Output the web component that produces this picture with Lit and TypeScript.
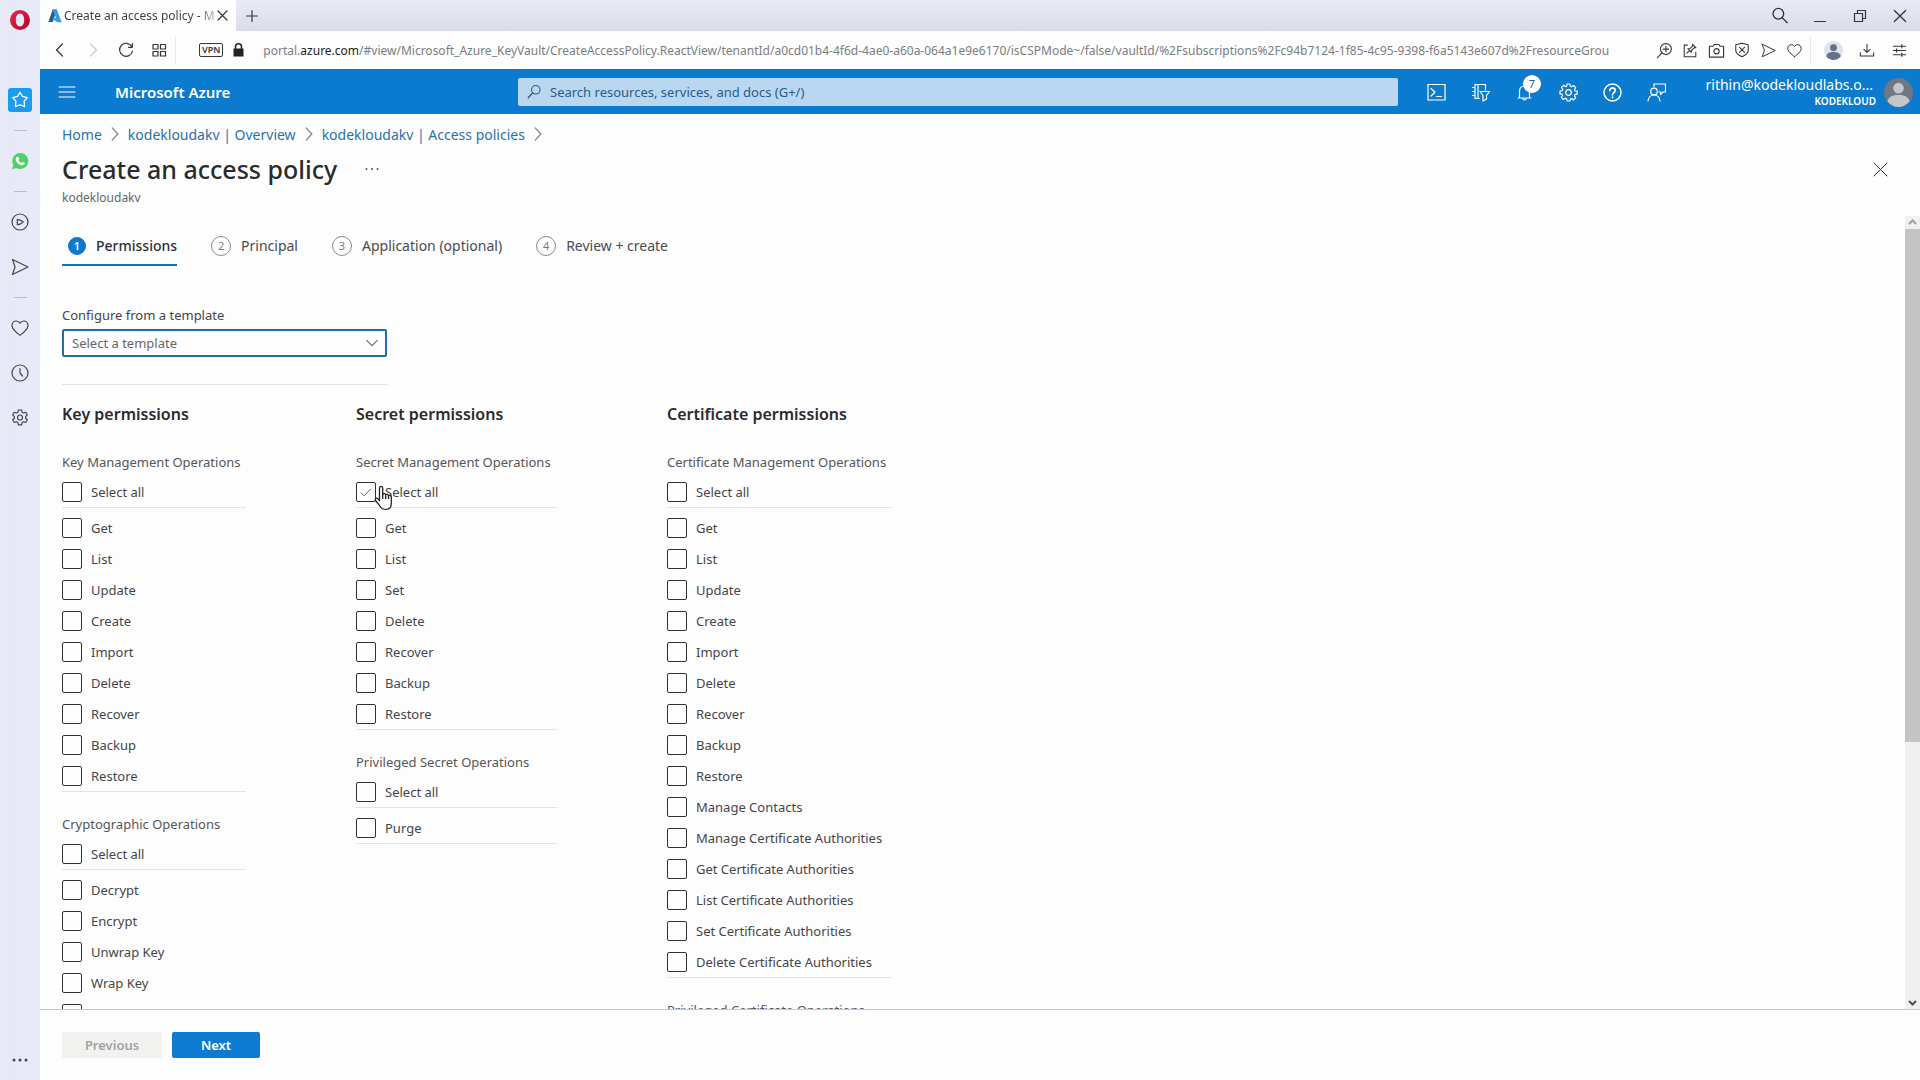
import { LitElement, html, svg, css, nothing } from "lit";
import type { TemplateResult } from "lit";
import { customElement, property } from "lit/decorators.js";
import { classMap } from "lit/directives/class-map.js";

const icon = (body: TemplateResult, size = 18, box = 18) => html`
  <svg width=${size} height=${size} viewBox="0 0 ${box} ${box}" fill="none" stroke="currentColor"
    stroke-width="1.2" stroke-linecap="round" stroke-linejoin="round" aria-hidden="true">${body}</svg>`;

const icons = {
  star: svg`<path d="M9 1.300l2.400 4.100 4.900 1.200-3.200 3.700.5 5.200L9 13.800l-4.600 1.700.5-5.200L1.700 6.600l4.900-1.200z" stroke-width="1.300"/>`,
  play: svg`<circle cx="9" cy="9" r="8"/><path d="M6.300 6.300v5.400c2 0 3.900-.9 6-2.700-2.100-1.800-4-2.700-6-2.700z"/>`,
  send: svg`<path d="M1.500 1.500L17 9 1.500 16.500 4 9z"/>`,
  heart: svg`<path d="M9 16.300C5 13.300 1 10.500 1 6.500 1 3.800 3 2 5.200 2 6.800 2 8.300 2.900 9 4.300 9.700 2.900 11.200 2 12.800 2 15 2 17 3.800 17 6.500c0 4-4 6.800-8 9.800z"/>`,
  clock: svg`<circle cx="9" cy="9" r="8"/><path d="M9 4.500V9l2.500 3"/>`,
  sideGear: svg`<path d="M7.400 1h3.200l.5 2.200 1.400.8 2.200-.8 1.600 2.700-1.700 1.600v1.800l1.700 1.500-1.600 2.700-2.200-.7-1.400.8-.5 2.300H7.400l-.5-2.300-1.400-.8-2.200.7-1.600-2.700 1.700-1.500V7.500L1.700 5.900l1.600-2.700 2.200.8 1.400-.8z"/><circle cx="9" cy="8.500" r="2.500"/>`,
  close: svg`<path d="M4 4l10 10M14 4L4 14"/>`,
  closeThin: svg`<path d="M3 3l13 13M16 3L3 16" stroke-width="1"/>`,
  closeTab: svg`<path d="M1 1l9 9M10 1L1 10"/>`,
  plus: svg`<path d="M9 3.500v11M3.500 9h11"/>`,
  back: svg`<path d="M11.500 3L5.500 9l6 6"/>`,
  forward: svg`<path d="M6.500 3l6 6-6 6"/>`,
  reload: svg`<path d="M14.800 5.600A6.500 6.500 0 1 0 15.500 10M15.300 2.500v3.800h-3.800"/>`,
  tiles: svg`<rect x="3" y="3.500" width="5" height="4.500"/><rect x="10.500" y="3.500" width="5" height="4.500"/><rect x="3" y="10.500" width="5" height="4.500"/><rect x="10.500" y="10.500" width="5" height="4.500"/>`,
  find: svg`<circle cx="7.500" cy="7" r="4.800"/><path d="M11 10.600L15.500 15"/>`,
  minimise: svg`<path d="M3.500 14.500h11"/>`,
  restore: svg`<path d="M3.500 6.500h8v8h-8zM6.500 6.500v-3h8v8h-3" stroke-linejoin="miter"/>`,
  zoomIn: svg`<circle cx="10.500" cy="7.500" r="5.800"/><path d="M6.400 11.600L1.500 16.500M7.700 7.500h5.600M10.500 4.700v5.600"/>`,
  pinEdit: svg`<path d="M6 3.500H2.500v13h13V11.500M5.500 12.500l3.200-3.200M6.500 7.500l4 4 .5-2.300 3-3 1.800.300-4-4 .3 1.800-3 3z"/>`,
  camera: svg`<path d="M1.500 4.500h3.800L6.500 2.700h5l1.200 1.800h3.800v11.500h-15z"/><circle cx="9" cy="9.800" r="2.800"/>`,
  shield: svg`<path d="M9 1.500l7 1.700v6.500c0 3-3 5.200-7 6.800-4-1.600-7-3.800-7-6.800V3.200z"/><path d="M6.200 6l5.600 5.600M11.800 6l-5.600 5.600"/>`,
  download: svg`<path d="M9 2.500v9M5.500 8.200L9 11.700l3.500-3.500M1.500 12v3.700h15V12"/>`,
  sliders: svg`<path d="M2.500 4.500h13M2.500 9h13M2.500 13.500h13M11.500 2.800v3.400M6 7.300v3.400M11.500 11.800v3.400"/>`,
  menu: svg`<path d="M1 4h16M1 9h16M1 14h16"/>`,
  azSearch: svg`<circle cx="11" cy="6.500" r="4.800"/><path d="M7.500 10L2.500 15.500" stroke-width="1.400"/>`,
  shell: svg`<path d="M1 1.500h17v15.500H1z" stroke-linejoin="miter"/><path d="M4 5.500l4 3.700L4 13M9.500 13.500h5"/>`,
  filter: svg`<path d="M8.500 15.500H4v-14h10.500v5.500M7 1.500v14M1.500 4.500H4M1.500 8.500H4M1.500 12.500H4M9 8.500h9.500L15.500 12.500v3.500l-3.500 2v-5.500z"/>`,
  bell: svg`<path d="M3 15h13M4.500 15V8.500C4.500 5 6.500 3 9.500 3s5 2 5 5.500V15M7.800 15.500c.2 2 3.200 2 3.400 0"/>`,
  gear: svg`<path d="M8 1h3l.4 2.300 1.300.5 1.900-1.300 2.100 2.100-1.300 1.900.5 1.300 2.300.4v3l-2.300.4-.5 1.300 1.300 1.900-2.100 2.100-1.900-1.300-1.300.5L11 18H8l-.4-2.300-1.300-.5-1.900 1.300-2.100-2.100 1.300-1.900-.5-1.300L1 11V8l2.300-.4.5-1.300-1.300-1.900L4.600 2.300l1.900 1.300L7.600 3.300z"/><circle cx="9.500" cy="9.500" r="2.800"/>`,
  help: svg`<circle cx="9.500" cy="9.500" r="8.500" stroke-width="1.500"/><path d="M6.800 7.500c0-3.500 5.400-3.300 5.400 0 0 2-2.700 2.100-2.700 4.300M9.500 14.200v.4" stroke-width="1.700"/>`,
  feedback: svg`<circle cx="7" cy="8.500" r="3.300"/><path d="M1 18c.5-3.800 2.700-6 6-6s5.500 2.200 6 6M7 3.500V1h11.500v8H16l-2.500 2.500V9H12"/>`,
  chevron: svg`<path d="M3 6l6 6 6-6"/>`,
  crumb: svg`<path d="M6.500 3.500L11.500 9l-5 5.500"/>`,
};

const avatar = (bg: string, fg: string, size: number) => html`
  <svg width=${size} height=${size} viewBox="0 0 30 30" aria-hidden="true">
    <circle cx="15" cy="15" r="15" fill=${bg}/>
    <circle cx="15" cy="10.500" r="5.500" fill=${fg}/>
    <path d="M3.500 24c1.500-5 5.500-6.500 11.500-6.500s10 1.500 11.500 6.500c-3 4-7 6-11.500 6s-8.500-2-11.500-6z" fill=${fg}/>
  </svg>`;

interface Group { title: string; items: string[]; hovered?: boolean }
interface Column { title: string; groups: Group[] }

const BASIC = ["Get", "List", "Update", "Create", "Import", "Delete", "Recover", "Backup", "Restore"];

const COLUMNS: Column[] = [
  {
    title: "Key permissions",
    groups: [
      { title: "Key Management Operations", items: BASIC },
      { title: "Cryptographic Operations", items: ["Decrypt", "Encrypt", "Unwrap Key", "Wrap Key", "Verify"] },
    ],
  },
  {
    title: "Secret permissions",
    groups: [
      { title: "Secret Management Operations", hovered: true, items: ["Get", "List", "Set", "Delete", "Recover", "Backup", "Restore"] },
      { title: "Privileged Secret Operations", items: ["Purge"] },
    ],
  },
  {
    title: "Certificate permissions",
    groups: [
      {
        title: "Certificate Management Operations",
        items: [...BASIC, "Manage Contacts", "Manage Certificate Authorities", "Get Certificate Authorities",
          "List Certificate Authorities", "Set Certificate Authorities", "Delete Certificate Authorities"],
      },
      { title: "Privileged Certificate Operations", items: ["Purge"] },
    ],
  },
];

const base = css`
  * { box-sizing: border-box; }
  button { font: inherit; color: inherit; background: none; border: 0; padding: 0; margin: 0; cursor: pointer; }
  svg { display: block; flex: none; }
  .icon-button { display: flex; align-items: center; justify-content: center; }
`;

@customElement("side-bar")
class SideBar extends LitElement {
  static styles = [base, css`
    :host { display: flex; flex-direction: column; align-items: center; width: 40px; padding: 9px 0 12px;
      background: linear-gradient(90deg, #e6eaf5, #e8e9f7); color: #3f4658; }
    .speed { width: 24px; height: 24px; border-radius: 3px; background: #1a9cf0; color: #fff; margin-top: 57px; }
    .rule { width: 13px; height: 1px; background: #b9bdcc; }
    .link { width: 24px; height: 24px; }
    .chat { margin: 18px 0; }
    .first { margin-top: 18px; }
    .send { margin: 21px 0 18px; }
    .heart { margin-top: 18px; }
    .later { margin-top: 21px; }
    .speed + .rule { margin-top: 18px; }
    .more { margin-top: auto; width: 24px; height: 16px; }
  `];
  render() {
    return html`
      <button class="icon-button" aria-label="Opera menu">
        <svg width="22" height="22" viewBox="0 0 22 22">
          <defs><linearGradient id="o" x1="0" x2="1" y1="0" y2="1"><stop offset="0" stop-color="#f3244a"/><stop offset="1" stop-color="#a50a2c"/></linearGradient></defs>
          <path fill="url(#o)" fill-rule="evenodd" d="M11 1a10 10 0 1 0 0 20 10 10 0 0 0 0-20zm0 3.500c2.600 0 4.200 2.900 4.200 6.500s-1.600 6.500-4.200 6.500S6.800 14.600 6.800 11 8.400 4.500 11 4.500z"/>
        </svg>
      </button>
      <button class="icon-button speed" aria-label="Speed Dial">${icon(icons.star)}</button>
      <div class="rule"></div>
      <button class="icon-button link chat" aria-label="WhatsApp">
        <svg width="18" height="18" viewBox="0 0 18 18">
          <path fill="#4fd264" d="M9.200 1a8 8 0 1 1-3.800 15L1 17.200l1.300-4.300A8 8 0 0 1 9.200 1z"/>
          <path fill="#fff" d="M6 4.800l1.300 0 1 2.300-.9 1.200c.7 1.300 1.700 2.100 3 2.700l1.100-1.200 2.200 1.200c0 1.700-1.500 2.400-2.900 2.200C7.600 12.700 5 9.900 4.700 7.400 4.600 6.300 5.200 5.300 6 4.800z"/>
        </svg>
      </button>
      <div class="rule"></div>
      <button class="icon-button link first" aria-label="Player">${icon(icons.play)}</button>
      <button class="icon-button link send" aria-label="My Flow">${icon(icons.send)}</button>
      <div class="rule"></div>
      <button class="icon-button link heart" aria-label="Bookmarks">${icon(icons.heart)}</button>
      <button class="icon-button link later" aria-label="History">${icon(icons.clock)}</button>
      <button class="icon-button link later" aria-label="Settings">${icon(icons.sideGear)}</button>
      <button class="icon-button more" aria-label="More">
        <svg width="18" height="6" viewBox="0 0 18 6" fill="currentColor"><circle cx="3" cy="3" r="1.500"/><circle cx="9" cy="3" r="1.500"/><circle cx="15" cy="3" r="1.500"/></svg>
      </button>`;
  }
}

@customElement("browser-chrome")
class BrowserChrome extends LitElement {
  static styles = [base, css`
    :host { display: block; color: #33363c; }
    .tabs { display: flex; align-items: stretch; height: 31px; background: linear-gradient(#e8ebf5, #d9dde6); }
    .tab { display: flex; align-items: center; gap: 2px; width: 196px; padding: 0 8px; background: #fdfdfd; font-size: 12px; }
    .title { flex: 1; overflow: hidden; white-space: nowrap;
      background: linear-gradient(90deg, #3a3d42 88%, transparent 106%); background-clip: text; color: transparent; }
    .new { width: 31px; }
    .window { display: flex; margin-left: auto; }
    .window button { width: 40px; }
    .bar { display: flex; align-items: center; height: 38px; background: #fdfdfd; padding-right: 4px; }
    .nav { display: flex; padding-left: 3px; }
    .nav button { width: 33px; height: 28px; }
    .dim { color: #c9cacd; }
    .split { width: 1px; height: 27px; background: #e8e8ec; }
    .vpn { border: 1px solid #33363c; border-radius: 2px; font-size: 9px; line-height: 12px; font-weight: 600; padding: 0 2px; margin: 0 10px 0 23px; }
    .address { flex: 1; min-width: 0; text-align: left; overflow: hidden; white-space: nowrap; font-size: 12px; color: #7c7e83; margin-left: 19px; }
    .host { color: #1c1d20; }
    .actions { display: flex; align-items: center; padding: 0 3px 0 7px; }
    .actions button { width: 26px; height: 28px; }
    .profile { display: flex; padding-left: 6px; }
    .profile button { width: 33px; height: 28px; }
  `];
  render() {
    return html`
      <div class="tabs">
        <div class="tab">
          <svg width="14" height="14" viewBox="0 0 14 14" aria-hidden="true">
            <path d="M4.700.5h4L4.800 13H.4z" fill="#1e5f94"/><path d="M4.700.5h4l5 12.700H9.500L4 9.500l4-.5-1.700-4z" fill="#2f9fe2"/>
          </svg>
          <span class="title">Create an access policy - M</span>
          <button class="icon-button" aria-label="Close tab">${icon(icons.closeTab, 11, 11)}</button>
        </div>
        <button class="icon-button new" aria-label="New tab">${icon(icons.plus)}</button>
        <div class="window">
          <button class="icon-button" aria-label="Search tabs">${icon(icons.find, 20)}</button>
          <button class="icon-button" aria-label="Minimise">${icon(icons.minimise)}</button>
          <button class="icon-button" aria-label="Restore">${icon(icons.restore)}</button>
          <button class="icon-button" aria-label="Close">${icon(icons.close, 20)}</button>
        </div>
      </div>
      <div class="bar">
        <div class="nav">
          <button class="icon-button" aria-label="Back">${icon(icons.back)}</button>
          <button class="icon-button dim" aria-label="Forward">${icon(icons.forward)}</button>
          <button class="icon-button" aria-label="Reload">${icon(icons.reload)}</button>
          <button class="icon-button" aria-label="Tab islands">${icon(icons.tiles)}</button>
        </div>
        <div class="split"></div>
        <button class="vpn">VPN</button>
        <svg width="11" height="14" viewBox="0 0 11 14" aria-hidden="true"><path d="M.5 5.500h10v8H.5z" fill="#222"/><path d="M2.500 6V3.800a3 3 0 0 1 6 0V6" fill="none" stroke="#222" stroke-width="1.500"/></svg>
        <button class="address">portal.<span class="host">azure.com</span>/#view/Microsoft_Azure_KeyVault/CreateAccessPolicy.ReactView/tenantId/a0cd01b4-4f6d-4ae0-a60a-064a1e9e6170/isCSPMode~/false/vaultId/%2Fsubscriptions%2Fc94b7124-1f85-4c95-9398-f6a5143e607d%2FresourceGrou</button>
        <div class="actions">
          <button class="icon-button" aria-label="Zoom">${icon(icons.zoomIn, 17)}</button>
          <button class="icon-button" aria-label="Pinboards">${icon(icons.pinEdit, 16)}</button>
          <button class="icon-button" aria-label="Snapshot">${icon(icons.camera, 17)}</button>
          <button class="icon-button" aria-label="Ad blocker">${icon(icons.shield, 16)}</button>
          <button class="icon-button" aria-label="Send">${icon(icons.send, 15)}</button>
          <button class="icon-button" aria-label="Bookmark">${icon(icons.heart, 15)}</button>
        </div>
        <div class="split"></div>
        <div class="profile">
          <button class="icon-button" aria-label="Profile">${avatar("#dfe3ee", "#66708a", 19)}</button>
          <button class="icon-button" aria-label="Downloads">${icon(icons.download, 16)}</button>
          <button class="icon-button" aria-label="Easy setup">${icon(icons.sliders, 17)}</button>
        </div>
      </div>`;
  }
}

@customElement("azure-header")
class AzureHeader extends LitElement {
  static styles = [base, css`
    :host { display: flex; align-items: center; height: 45px; background: #0b7bd0; color: #fff; border-top: 1px solid #2a6ca3; }
    .brand { display: flex; align-items: center; width: 478px; padding-left: 18px; gap: 39px; }
    .name { font-size: 15px; font-weight: 600; color: #fff; text-decoration: none; }
    .search { flex: 1; display: flex; align-items: center; gap: 8px; height: 28px; padding: 0 8px; border-radius: 2px; background: #b9d7f1; color: #26547f; }
    .search input { flex: 1; min-width: 0; border: 0; outline: 0; background: none; padding: 0; font: inherit; font-size: 13px; color: inherit; }
    .search input::placeholder { color: #2d5a86; opacity: 1; }
    .tools { display: flex; padding-left: 16px; }
    .tools button { position: relative; width: 44px; height: 44px; }
    .badge { position: absolute; left: 21px; top: 5px; width: 18px; height: 18px; border-radius: 50%; background: #fff; color: #33557a; font-size: 11px; line-height: 18px; text-align: center; }
    .account { display: flex; align-items: center; justify-content: flex-end; gap: 8px; width: 242px; padding-right: 7px; text-align: right; }
    .who { display: flex; flex-direction: column; padding-top: 1px; }
    .mail { font-size: 14px; line-height: 18px; padding-right: 3px; }
    .org { font-size: 10px; line-height: 15px; font-weight: 600; }
  `];
  render() {
    return html`
      <div class="brand">
        <button aria-label="Portal menu">${icon(icons.menu)}</button>
        <a class="name" href="#home">Microsoft Azure</a>
      </div>
      <label class="search">
        ${icon(icons.azSearch, 16)}
        <input type="search" aria-label="Search" placeholder="Search resources, services, and docs (G+/)" />
      </label>
      <div class="tools">
        <button class="icon-button" aria-label="Cloud Shell">${icon(icons.shell, 19, 19)}</button>
        <button class="icon-button" aria-label="Directories + subscriptions">${icon(icons.filter, 19, 19)}</button>
        <button class="icon-button" aria-label="Notifications">${icon(icons.bell, 19, 19)}<span class="badge">7</span></button>
        <button class="icon-button" aria-label="Settings">${icon(icons.gear, 19, 19)}</button>
        <button class="icon-button" aria-label="Help">${icon(icons.help, 19, 19)}</button>
        <button class="icon-button" aria-label="Feedback">${icon(icons.feedback, 19, 19)}</button>
      </div>
      <button class="account">
        <span class="who"><span class="mail">rithin@kodekloudlabs.o...</span><span class="org">KODEKLOUD</span></span>
        ${avatar("#6f7782", "#c3c6cc", 29)}
      </button>`;
  }
}

@customElement("permission-group")
class PermissionGroup extends LitElement {
  @property({ attribute: false }) group!: Group;
  static styles = [base, css`
    :host { display: block; }
    .group { border: 0; margin: 0; padding: 0; min-width: 0; }
    .legend { padding: 0; font-size: 13px; line-height: 20px; color: #55565a; white-space: nowrap; }
    .all { padding: 10px 0 5px; border-bottom: 1px solid #e3e3e5; }
    .list { display: flex; flex-direction: column; gap: 11px; padding: 10px 0 5px; border-bottom: 1px solid #e3e3e5; }
    .item { position: relative; display: flex; align-items: center; gap: 9px; height: 20px; font-size: 13px; color: #45464a; white-space: nowrap; width: max-content; }
    .box { appearance: none; width: 20px; height: 20px; margin: 0; border: 1px solid #323130; border-radius: 2px; background: #fefefe; }
    .tick { position: absolute; left: 3px; top: 3px; color: #666; pointer-events: none; }
    .pointer { position: absolute; left: 18px; top: 3px; pointer-events: none; }
  `];
  private item(label: string, hovered = false) {
    return html`
      <label class="item">
        <input class="box" type="checkbox" />${label}
        ${hovered ? html`
          <svg class="tick" width="14" height="14" viewBox="0 0 14 14" fill="none" stroke="currentColor"><path d="M2 7.500l3.200 3.300L12 3.800"/></svg>
          <svg class="pointer" width="19" height="26" viewBox="0 0 19 26" fill="#fff" stroke="#222" stroke-width="1.300" stroke-linejoin="round">
            <path d="M5.500 15.500V3.200c0-2.400 3.200-2.400 3.200 0V9.800c.3-1.600 2.900-1.500 3 .3.500-1.300 2.700-1 2.800.7.700-1 2.800-.7 2.800 1.300v6.100c0 4-2.300 6.200-5.600 6.200-3.200 0-4.700-1.300-6-3.700L1.500 15.500c-1-2 1.200-3 2.300-1.700z"/>
            <path d="M8.700 10v4M11.700 10.500V14M14.500 11v3" fill="none"/>
          </svg>` : nothing}
      </label>`;
  }
  render() {
    return html`
      <fieldset class="group">
        <legend class="legend">${this.group.title}</legend>
        <div class="all">${this.item("Select all", this.group.hovered)}</div>
        <div class="list">${this.group.items.map((label) => this.item(label))}</div>
      </fieldset>`;
  }
}

@customElement("app-root")
class AppRoot extends LitElement {
  static styles = [base, css`
    :host { display: flex; height: 100vh; overflow: hidden; background: #fdfdfd; color: #323130;
      font-family: "Noto Sans", "Open Sans", sans-serif; font-size: 14px; }
    .page { flex: 1; min-width: 0; display: flex; flex-direction: column; }
    .head { padding: 8px 30px 0 22px; height: 102px; }
    .crumbs { display: flex; align-items: center; gap: 3px; height: 24px; font-size: 14px; white-space: nowrap; }
    .crumbs a { color: #2a72ad; text-decoration: none; }
    .crumbs svg { color: #85878c; }
    .titles { display: flex; align-items: center; height: 46px; gap: 28px; }
    .titles h1 { margin: 0; font-size: 25px; line-height: 32px; font-weight: 500; color: #2b2b2d; }
    .titles .leave { margin-left: auto; }
    .sub { font-size: 12px; line-height: 16px; margin-top: -2px; color: #66676b; }
    .body { flex: 1; min-height: 0; display: flex; }
    .pane { flex: 1; min-width: 0; overflow: hidden; padding: 16px 22px 0; }
    .steps { display: flex; gap: 28px; }
    .step { display: flex; align-items: center; gap: 10px; height: 34px; padding: 0 0 5px 6px; font-size: 14px; color: #4a4b4f; border-bottom: 2px solid transparent; }
    .step.current { border-color: #1a6fb0; color: #2f3033; font-weight: 500; }
    .num { width: 20px; height: 20px; border: 1px solid #8a8b8f; border-radius: 50%; font-size: 11px; line-height: 18px; text-align: center; color: #7a7b7f; font-weight: 400; }
    .current .num { width: 18px; height: 18px; line-height: 16px; background: #0f78cc; border-color: #0f78cc; color: #fff; font-weight: 600; }
    .template { display: flex; flex-direction: column; width: 326px; padding: 38px 0 27px; border-bottom: 1px solid #e3e3e5; }
    .template label { font-size: 13px; line-height: 22px; margin-bottom: 3px; color: #45464a; }
    .picker { display: grid; align-items: center; width: 325px; }
    .picker select { grid-area: 1 / 1; appearance: none; height: 28px; padding: 0 30px 0 8px; border: 2px solid #1a6fa8; border-radius: 2px; background: #fefefe; font: inherit; font-size: 13px; color: #66676b; }
    .picker svg { grid-area: 1 / 1; justify-self: end; margin-right: 7px; color: #66676b; pointer-events: none; }
    .columns { display: grid; grid-template-columns: 184px 201px 225px; gap: 110px; padding-top: 17px; }
    .column h2 { margin: 0 0 26px; font-size: 16px; line-height: 24px; font-weight: 600; white-space: nowrap; color: #2b2b2d; }
    .column permission-group + permission-group { margin-top: 22px; }
    .scroll { width: 15px; display: flex; flex-direction: column; align-items: center; padding: 2px 0; gap: 2px; background: #f0f0f0; color: #a0a0a0; }
    .thumb { width: 15px; height: 65%; background: #c4c4c5; }
    .down { margin-top: auto; color: #505050; }
    .foot { display: flex; gap: 10px; height: 71px; padding: 22px; border-top: 1px solid #c8c8cc; }
    .foot button { height: 26px; border-radius: 2px; font-size: 13px; font-weight: 600; }
    .prev { width: 100px; background: #f1f1f0; color: #a3a2a1; }
    .next { width: 88px; background: #0f7bd0; color: #fff; }
    .foot .prev:disabled { cursor: default; }
  `];
  render() {
    const steps = ["Permissions", "Principal", "Application (optional)", "Review + create"];
    const crumbs = ["Home", "kodekloudakv | Overview", "kodekloudakv | Access policies"];
    return html`
      <side-bar></side-bar>
      <div class="page">
        <browser-chrome></browser-chrome>
        <azure-header></azure-header>
        <header class="head">
          <nav class="crumbs" aria-label="Breadcrumb">
            ${crumbs.map((c) => html`<a href="#${c}">${c}</a>${icon(icons.crumb, 20)}`)}
          </nav>
          <div class="titles">
            <h1>Create an access policy</h1>
            <button aria-label="More actions">
              <svg width="14" height="4" viewBox="0 0 14 4" fill="#555"><circle cx="1.500" cy="2" r="1"/><circle cx="7" cy="2" r="1"/><circle cx="12.500" cy="2" r="1"/></svg>
            </button>
            <button class="icon-button leave" aria-label="Close">${icon(icons.closeThin, 19, 19)}</button>
          </div>
          <div class="sub">kodekloudakv</div>
        </header>
        <div class="body">
          <main class="pane">
            <div class="steps">
              ${steps.map((s, i) => html`<button class=${classMap({ step: true, current: i === 0 })}><span class="num">${i + 1}</span>${s}</button>`)}
            </div>
            <div class="template">
              <label for="template">Configure from a template</label>
              <div class="picker">
                <select id="template"><option>Select a template</option></select>
                ${icon(icons.chevron, 16)}
              </div>
            </div>
            <div class="columns">
              ${COLUMNS.map((c) => html`<section class="column"><h2>${c.title}</h2>
                ${c.groups.map((g) => html`<permission-group .group=${g}></permission-group>`)}</section>`)}
            </div>
          </main>
          <div class="scroll" aria-hidden="true">
            <svg width="9" height="9" viewBox="0 0 9 9" fill="none" stroke="currentColor" stroke-width="2"><path d="M1 6l3.500-3.500L8 6"/></svg>
            <div class="thumb"></div>
            <svg class="down" width="9" height="9" viewBox="0 0 9 9" fill="none" stroke="currentColor" stroke-width="2"><path d="M1 3l3.500 3.500L8 3"/></svg>
          </div>
        </div>
        <footer class="foot">
          <button class="prev" disabled>Previous</button>
          <button class="next">Next</button>
        </footer>
      </div>`;
  }
}
